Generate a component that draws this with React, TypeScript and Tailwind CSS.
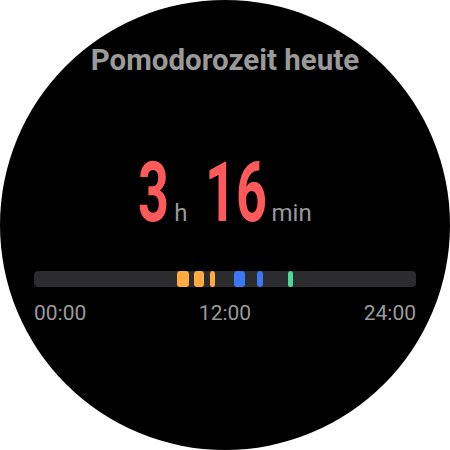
const sessions = [
  { start: 143, width: 12, color: "#ffab40" },
  { start: 160, width: 10, color: "#ffab40" },
  { start: 176, width: 5, color: "#ffab40" },
  { start: 200, width: 11, color: "#3a78f6" },
  { start: 223, width: 6, color: "#3a78f6" },
  { start: 254, width: 5, color: "#4cd99a" },
];

function BigDigits({ value, width }: { value: string; width: string }) {
  return (
    <span
      className={`inline-block ${width} origin-left scale-x-[0.65] whitespace-nowrap text-[83px] font-bold leading-none text-[#ff5a5a]`}
    >
      {value}
    </span>
  );
}

export default function App() {
  return (
    <div className="h-[450px] w-[450px] bg-white font-['Roboto',sans-serif]">
      <div className="flex h-full w-full flex-col items-center rounded-full bg-black">
        <div className="mt-[46px] text-[29.5px] font-bold leading-none text-[#9a9a9a]">
          Pomodorozeit heute
        </div>

        <div className="mt-[75px] flex items-baseline">
          <BigDigits value="3" width="w-[30px]" />
          <span className="ml-[6px] text-[24px] leading-none text-[#9a9a9a]">h</span>
          <span className="ml-[17px] inline-block">
            <BigDigits value="16" width="w-[61px]" />
          </span>
          <span className="ml-[6px] text-[24px] leading-none text-[#9a9a9a]">min</span>
        </div>

        <div className="mt-[37px] w-[382px]">
          <div className="relative h-[16px] overflow-hidden rounded-[4px] bg-[#2c2c2e]">
            {sessions.map((s, i) => (
              <div
                key={i}
                className="absolute top-0 h-full rounded-[3px]"
                style={{ left: s.start, width: s.width, background: s.color }}
              />
            ))}
          </div>
          <div className="mt-[16px] flex justify-between text-[21px] leading-none text-[#9a9a9a]">
            <span>00:00</span>
            <span>12:00</span>
            <span>24:00</span>
          </div>
        </div>
      </div>
    </div>
  );
}
